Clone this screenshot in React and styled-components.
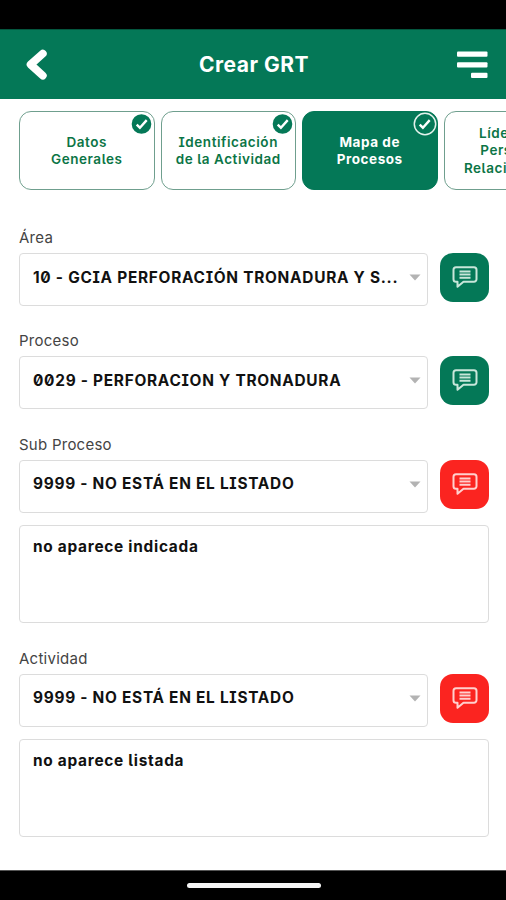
import styled, { createGlobalStyle } from 'styled-components'

const GlobalStyle = createGlobalStyle`
	* {
		box-sizing: border-box;
	}

	body {
		margin: 0;
		background-color: white;
		font-family: Inter, 'Noto Sans', sans-serif;
		font-feature-settings: 'zero', 'cv05', 'cv08';
	}
`

const Pantalla = styled.div`
	display: flex;
	flex-direction: column;
	width: 506px;
	height: 900px;
	overflow: hidden;
`

const BarraEstado = styled.div`
	flex: none;
	height: 29px;
	background-color: black;
`

const Encabezado = styled.header`
	flex: none;
	display: flex;
	align-items: center;
	justify-content: space-between;
	height: 70px;
	padding: 0 17px 0 25px;
	background-color: #047857;
	border-top: 1px solid #04573f;
	color: white;
`

const Titulo = styled.h1`
	margin: 0 0 0 2px;
	font-size: 21px;
	font-weight: 700;
	line-height: 28px;
	letter-spacing: 0.5px;
	white-space: nowrap;
`

const BotonIcono = styled.button`
	display: flex;
	padding: 0;
	border: none;
	background: none;
	color: inherit;
`

const Pasos = styled.nav`
	flex: none;
	display: flex;
	gap: 6px;
	padding: 12px 0 0 19px;
	overflow: hidden;
`

const Paso = styled.div`
	position: relative;
	flex: none;
	display: flex;
	align-items: center;
	justify-content: center;
	width: 135.5px;
	height: 79px;
	padding-top: 1px;
	border: 1px solid ${({ $activo }) => ($activo ? '#047857' : '#6f9f8e')};
	border-radius: 12px;
	background-color: ${({ $activo }) => ($activo ? '#047857' : 'white')};
	color: ${({ $activo }) => ($activo ? 'white' : '#0b7546')};
	font-size: 13.5px;
	font-weight: ${({ $activo }) => ($activo ? 700 : 600)};
	line-height: 17.3px;
	letter-spacing: 0.55px;
	text-align: center;
	white-space: pre-line;
`

const Insignia = styled.svg`
	position: absolute;
	top: 0;
	right: 0;
`

const Formulario = styled.main`
	flex: 1;
	display: flex;
	flex-direction: column;
	gap: 25.45px;
	padding: 38px 17px 0 19px;
`

const Campo = styled.section`
	display: flex;
	flex-direction: column;
`

const Etiqueta = styled.label`
	margin-bottom: 5px;
	color: #444;
	font-size: 15px;
	font-weight: 400;
	line-height: 20px;
	letter-spacing: 0.25px;
`

const Fila = styled.div`
	display: flex;
	align-items: flex-start;
	gap: 12.5px;
`

const Selector = styled.div`
	flex: 1;
	min-width: 0;
	display: flex;
	align-items: center;
	justify-content: space-between;
	height: 53px;
	padding: 0 6px 4px 13px;
	border: 1px solid #dcdcdc;
	border-radius: 4px;
`

const Valor = styled.span`
	color: #111;
	font-size: 15.4px;
	font-weight: 700;
	line-height: 24px;
	letter-spacing: 0.73px;
	white-space: nowrap;
`

const BotonComentario = styled.button`
	flex: none;
	display: flex;
	align-items: center;
	justify-content: center;
	width: 49px;
	height: 49px;
	padding: 0 0 1px;
	border: none;
	border-radius: 13px;
	background-color: ${({ $alerta }) => ($alerta ? '#fb2420' : '#047857')};
`

const Detalle = styled.div`
	height: 98px;
	margin-top: 12.5px;
	padding: 9px 13px;
	border: 1px solid #dcdcdc;
	border-radius: 4px;
`

const BarraInferior = styled.footer`
	flex: none;
	display: flex;
	justify-content: center;
	height: 30px;
	padding: 12px 0 0 1px;
	background-color: black;
	border-top: 1px solid #555;
`

const Indicador = styled.div`
	width: 134px;
	height: 5px;
	border-radius: 3px;
	background-color: #f5f5f5;
`

const pasos = [
	{ texto: 'Datos\nGenerales', listo: true },
	{ texto: 'Identificación\nde la Actividad', listo: true },
	{ texto: 'Mapa de\nProcesos', listo: true, activo: true },
	{ texto: 'Líderes y\nPersonal\nRelacionados' }
]

const campos = [
	{ nombre: 'Área', valor: '10 - GCIA PERFORACIÓN TRONADURA Y S...' },
	{ nombre: 'Proceso', valor: '0029 - PERFORACION Y TRONADURA' },
	{
		nombre: 'Sub Proceso',
		valor: '9999 - NO ESTÁ EN EL LISTADO',
		detalle: 'no aparece indicada'
	},
	{
		nombre: 'Actividad',
		valor: '9999 - NO ESTÁ EN EL LISTADO',
		detalle: 'no aparece listada'
	}
]

const IconoVolver = () => (
	<svg width='24' height='32' viewBox='0 0 24 32' fill='none'>
		<path d='M17.8 4.6 5.6 15.5 17.8 26.6' stroke='white' strokeWidth='7.8' strokeLinecap='round' strokeLinejoin='round' />
	</svg>
)

const IconoMenu = () => (
	<svg width='32' height='28' viewBox='0 0 32 28' fill='white'>
		<rect x='0' y='0.5' width='30.5' height='5.3' rx='1' />
		<rect x='0' y='11.2' width='30.5' height='5.3' rx='1' />
		<rect x='14' y='21.8' width='16.5' height='5.3' rx='1' />
	</svg>
)

const IconoListo = ({ activo }) => (
	<Insignia width='24' height='24' viewBox='0 0 24 24' fill='none'>
		<circle cx={activo ? 12 : 11.5} cy='12' r={activo ? 10.7 : 9.8} fill='#047857' stroke={activo ? '#e4f2ec' : 'none'} strokeWidth='1.5' />
		<path d='m6.7 12.6 3.2 3.1 6.8-7.6' stroke='white' strokeWidth='2.4' />
	</Insignia>
)

const IconoComentario = ({ alerta }) => (
	<svg width='26' height='24' viewBox='0 0 26 24' fill='none' stroke={alerta ? '#ffd0ce' : '#c8e6da'}>
		<path d='M4 2.2h18a2.5 2.5 0 0 1 2.5 2.5v9.6a2.5 2.5 0 0 1-2.5 2.5H11.5l-6 5v-5H4a2.5 2.5 0 0 1-2.5-2.5V4.7A2.5 2.5 0 0 1 4 2.2Z' strokeWidth='2' strokeLinejoin='round' />
		<path d='M7.5 6.5h11M7.5 9.6h11M7.5 12.7h11' strokeWidth='2' />
	</svg>
)

const Flecha = () => (
	<svg width='12' height='7' viewBox='0 0 12 7'>
		<path d='M0.5 0.5h11L6 6.5Z' fill='#b3b3b3' />
	</svg>
)

export default function App() {
	return (
		<Pantalla>
			<GlobalStyle />
			<BarraEstado />
			<Encabezado>
				<BotonIcono>
					<IconoVolver />
				</BotonIcono>
				<Titulo>Crear GRT</Titulo>
				<BotonIcono>
					<IconoMenu />
				</BotonIcono>
			</Encabezado>
			<Pasos>
				{pasos.map(({ texto, listo, activo }) => (
					<Paso key={texto} $activo={activo}>
						{texto}
						{listo && <IconoListo activo={activo} />}
					</Paso>
				))}
			</Pasos>
			<Formulario>
				{campos.map(({ nombre, valor, detalle }) => (
					<Campo key={nombre}>
						<Etiqueta>{nombre}</Etiqueta>
						<Fila>
							<Selector>
								<Valor>{valor}</Valor>
								<Flecha />
							</Selector>
							<BotonComentario $alerta={!!detalle}>
								<IconoComentario alerta={!!detalle} />
							</BotonComentario>
						</Fila>
						{detalle && (
							<Detalle>
								<Valor>{detalle}</Valor>
							</Detalle>
						)}
					</Campo>
				))}
			</Formulario>
			<BarraInferior>
				<Indicador />
			</BarraInferior>
		</Pantalla>
	)
}
